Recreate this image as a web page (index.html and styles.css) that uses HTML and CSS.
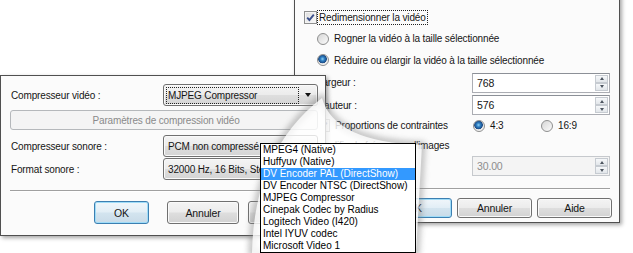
FILE: index.html
```html
<!DOCTYPE html>
<html lang="fr">
<head>
    <meta charset="UTF-8">
    <title>Compression vidéo</title>
    <link rel="stylesheet" href="styles.css">
</head>
<body>
<div class="desk">

    <!-- Fenêtre de redimensionnement (derrière) -->
    <div class="win win-resize">
        <div class="row row-top">
            <span class="check on"><svg viewBox="0 0 11 11"><path d="M2.2 5.6 L4.4 8 L8.8 2.6"/></svg></span>
            <span class="focus">Redimensionner la vidéo</span>
        </div>
        <div class="sub">
            <div class="row r21"><span class="radio"></span>Rogner la vidéo à la taille sélectionnée</div>
            <div class="row r22"><span class="radio on"></span>Réduire ou élargir la vidéo à la taille sélectionnée</div>
            <div class="fields">
                <div class="row">Largeur :</div>
                <div class="spin"><span>768</span><span class="arrows"><i class="up"></i><i class="dn"></i></span></div>
                <div class="row">Hauteur :</div>
                <div class="spin"><span>576</span><span class="arrows"><i class="up"></i><i class="dn"></i></span></div>
                <div class="row"><span class="check on"><svg viewBox="0 0 11 11"><path d="M2.2 5.6 L4.4 8 L8.8 2.6"/></svg></span>Proportions de contraintes</div>
                <div class="ratios">
                    <span class="row ratio"><span class="radio on"></span>4:3</span>
                    <span class="row ratio"><span class="radio"></span>16:9</span>
                </div>
                <div class="row wide"><span class="check"></span>Modifier la fréquence d'images</div>
                <div></div>
                <div class="spin off"><span>30.00</span><span class="arrows"><i class="up"></i><i class="dn"></i></span></div>
            </div>
        </div>
        <div class="sep"></div>
        <div class="buttons">
            <span class="btn default">OK</span>
            <span class="btn">Annuler</span>
            <span class="btn">Aide</span>
        </div>
    </div>

    <!-- Fenêtre de compression (devant) -->
    <div class="win win-codec">
        <div class="codec-row r-video">
            <span class="lbl">Compresseur vidéo :</span>
            <span class="combo"><span class="txt focus">MJPEG Compressor</span><i class="caret"></i></span>
        </div>
        <span class="btn disabled r-params">Paramètres de compression vidéo</span>
        <div class="codec-row r-audio">
            <span class="lbl">Compresseur sonore :</span>
            <span class="combo"><span class="txt">PCM non compressé</span><i class="caret"></i></span>
        </div>
        <div class="codec-row r-format">
            <span class="lbl">Format sonore :</span>
            <span class="combo"><span class="txt">32000 Hz, 16 Bits, Stéréo</span><i class="caret"></i></span>
        </div>
        <div class="sep"></div>
        <div class="buttons codec-buttons">
            <span class="btn default b-ok">OK</span>
            <span class="btn b-cancel">Annuler</span>
            <span class="btn b-help"></span>
        </div>
    </div>

    <!-- Loupe vers la liste déroulante -->
    <svg class="cone" width="633" height="253" viewBox="0 0 633 253">
        <defs>
            <filter id="soft" x="-20%" y="-20%" width="140%" height="140%">
                <feGaussianBlur stdDeviation="3"/>
            </filter>
        </defs>
        <path class="cone-edge" d="M322 98 Q334 142 422 145 L416 253 L252 253 Q254 150 322 98 Z"/>
        <path class="cone-fill" d="M322 98 Q334 142 422 145 L416 253 L252 253 Q254 150 322 98 Z"/>
    </svg>

    <ul class="list">
        <li>MPEG4 (Native)</li>
        <li>Huffyuv (Native)</li>
        <li class="sel">DV Encoder PAL (DirectShow)</li>
        <li>DV Encoder NTSC (DirectShow)</li>
        <li>MJPEG Compressor</li>
        <li>Cinepak Codec by Radius</li>
        <li>Logitech Video (I420)</li>
        <li>Intel IYUV codec</li>
        <li>Microsoft Video 1</li>
    </ul>
</div>
</body>
</html>
```

FILE: styles.css
```css
* {
    box-sizing: border-box;
}

body {
    margin: 0;
    background: #fff;
    font-family: 'Liberation Sans', Arial, sans-serif;
    font-size: 10px;
    color: #151515;
}

.desk {
    position: relative;
    width: 633px;
    height: 253px;
    overflow: hidden;
}

/* windows */
.win {
    position: absolute;
    background: #fbfbfb;
    border: 1px solid #505050;
    box-shadow: 2px 2px 4px rgba(0,0,0,0.35);
    letter-spacing: -0.15px;
}

.win-resize {
    left: 294px;
    top: -12px;
    width: 326px;
    height: 235px;
    padding: 17px 9px 5px 9px;
    z-index: 1;
}

.win-codec {
    left: 0;
    top: 75px;
    width: 326px;
    height: 161px;
    padding: 8px 7px 0 9px;
    z-index: 2;
}

.row {
    display: flex;
    align-items: center;
    gap: 5px;
    white-space: nowrap;
}

.row-top {
    height: 22px;
    gap: 1px;
}

.focus {
    outline: 1px dotted #222;
    padding: 1px 1px;
}

.sub {
    margin-left: 13px;
}

.r21 { height: 21px; }
.r22 { height: 22px; }

/* checkbox & radio */
.check {
    width: 13px;
    height: 13px;
    flex: none;
    border: 1px solid #8e8f8f;
    background: linear-gradient(135deg, #dcdcdc, #fbfbfb);
    box-shadow: inset 0 0 0 1px #f4f4f4;
    display: flex;
    align-items: center;
    justify-content: center;
}

.check svg {
    width: 11px;
    height: 11px;
}

.check path {
    fill: none;
    stroke: #3a4f8c;
    stroke-width: 1.9;
}

.radio {
    width: 12px;
    height: 12px;
    flex: none;
    border-radius: 50%;
    border: 1px solid #8e8f8f;
    background: linear-gradient(135deg, #d6d6d6, #fbfbfb);
}

.radio.on {
    background: radial-gradient(circle at 45% 40%, #8fd0f5 0, #2d7ec2 2px, #1d4c86 4px, #e4e4e4 4.6px, #f7f7f7 6px);
}

/* fields grid */
.fields {
    display: grid;
    grid-template-columns: 155px 138px;
    grid-template-rows: 23px 22px 19px 20px 22px;
    align-items: center;
}

.fields .wide {
    grid-column: 1 / 3;
    margin-left: -13px;
    gap: 1px;
}

.spin {
    height: 20px;
    border: 1px solid #abadb3;
    border-top-color: #8c9097;
    background: #fff;
    display: flex;
    align-items: stretch;
    justify-content: space-between;
    padding: 1px 1px 1px 4px;
    font-size: 10.5px;
}

.spin span:first-child {
    align-self: center;
}

.spin.off {
    background: #f4f4f4;
    border-color: #c6c9cd;
    color: #8d8d8d;
}

.arrows {
    width: 13px;
    display: flex;
    flex-direction: column;
}

.arrows i {
    flex: 1;
    border: 1px solid #c6cbd1;
    background: linear-gradient(#f6f8fa, #e2e6ea);
    display: flex;
    align-items: center;
    justify-content: center;
}

.arrows i::after {
    content: '';
    border-left: 2.5px solid transparent;
    border-right: 2.5px solid transparent;
}

.arrows .up::after {
    border-bottom: 3px solid #4d5560;
}

.arrows .dn::after {
    border-top: 3px solid #4d5560;
}

.ratios {
    display: flex;
}

.ratio {
    width: 68px;
    padding-left: 1px;
}

/* separators & buttons */
.sep {
    border-top: 1px solid #a0a0a0;
    border-bottom: 1px solid #fff;
    margin-top: 11px;
}

.buttons {
    display: flex;
    justify-content: flex-end;
    gap: 5px;
    margin-top: 8px;
    margin-right: -2px;
}

.btn {
    width: 75px;
    height: 20px;
    border: 1px solid #707070;
    border-radius: 3px;
    background: linear-gradient(#f4f4f4 0%, #ececec 48%, #dedede 52%, #d2d2d2 100%);
    box-shadow: inset 0 0 0 1px #fafafa;
    display: flex;
    align-items: center;
    justify-content: center;
    font-size: 10.5px;
}

.btn.default {
    border-color: #3c7fb1;
    box-shadow: inset 0 0 0 1px #9fdcf8;
    background: linear-gradient(#f0f6fa 0%, #e2eef6 48%, #d3e4ef 52%, #c9dbe8 100%);
}

.btn.disabled {
    border-color: #b5b8bb;
    background: #f4f4f4;
    box-shadow: none;
    color: #8a8a8a;
    font-size: 10px;
}

/* codec window */
.codec-row {
    display: grid;
    grid-template-columns: 153px 155px;
    align-items: center;
}

.lbl {
    padding-left: 1px;
}

.combo {
    height: 22px;
    border: 1px solid #707070;
    border-radius: 3px;
    background: linear-gradient(#f4f4f4 0%, #ececec 48%, #dedede 52%, #d4d4d4 100%);
    box-shadow: inset 0 0 0 1px #fafafa;
    display: flex;
    align-items: center;
    padding: 0 6px 0 3px;
    font-size: 10px;
    white-space: nowrap;
    overflow: hidden;
}

.combo .txt {
    flex: 1;
    padding: 2px 1px;
    overflow: hidden;
}

.combo .txt.focus {
    margin-right: 7px;
}

.caret {
    flex: none;
    border-left: 3.5px solid transparent;
    border-right: 3.5px solid transparent;
    border-top: 4px solid #111;
}

.r-video { height: 22px; }

.r-params {
    display: flex;
    width: 308px;
    height: 20px;
    margin-top: 4px;
    padding-left: 4px;
}

.r-audio {
    height: 22px;
    margin-top: 5px;
}

.r-format {
    height: 21px;
    margin-top: 1px;
}

.win-codec .sep {
    margin-top: 11px;
    width: 301px;
}

.codec-buttons {
    justify-content: flex-start;
    gap: 0;
    margin-top: 9px;
}

.codec-buttons .btn {
    height: 23px;
}

.b-ok {
    width: 55px;
    margin-left: 84px;
}

.b-cancel {
    width: 72px;
    margin-left: 18px;
}

.b-help {
    width: 72px;
    margin-left: 9px;
}

/* magnifier cone */
.cone {
    position: absolute;
    left: 0;
    top: 0;
    z-index: 3;
    pointer-events: none;
}

.cone-edge {
    fill: none;
    stroke: #7d7d7d;
    stroke-width: 6;
    opacity: 0.55;
    filter: url(#soft);
}

.cone-fill {
    fill: #fff;
    fill-opacity: 0.8;
}

/* drop-down list */
.list {
    position: absolute;
    left: 260px;
    top: 143px;
    width: 156px;
    margin: 0;
    padding: 0;
    list-style: none;
    border: 1px solid #000;
    background: #fff;
    font-size: 10px;
    color: #000;
    z-index: 4;
}

.list li {
    height: 12px;
    line-height: 12px;
    padding-left: 2px;
    white-space: nowrap;
}

.list .sel {
    background: #3399ff;
    color: #fff;
}
```
